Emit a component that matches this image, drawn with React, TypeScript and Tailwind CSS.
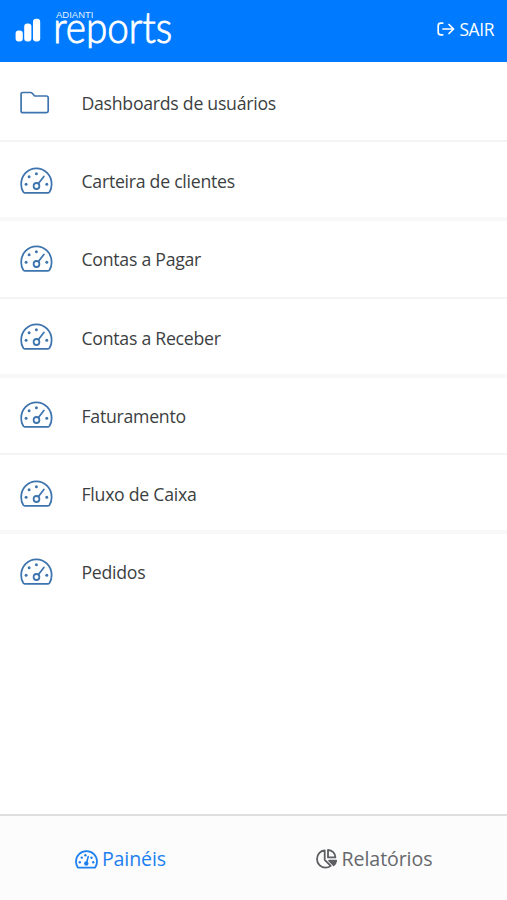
const rows = [
  'Dashboards de usuários',
  'Carteira de clientes',
  'Contas a Pagar',
  'Contas a Receber',
  'Faturamento',
  'Fluxo de Caixa',
  'Pedidos',
];

function Folder() {
  return (
    <svg className="h-[24px] w-[30px]" viewBox="0 0 30 24" fill="none" stroke="#3d74ad" strokeWidth="1.7" strokeLinejoin="round">
      <path d="M2.8 1.5H10.7Q11.6 1.5 12.2 2.2L14.7 5H26.3Q28.2 5 28.2 6.8V20.1Q28.2 21.6 26.5 21.6H2.9Q1.1 21.6 1.1 19.9V3.2Q1.1 1.5 2.8 1.5Z" />
    </svg>
  );
}

function Gauge() {
  return (
    <svg className="mb-[2px] h-[27px] w-[33px]" viewBox="0 0 34 27" preserveAspectRatio="none" fill="none" stroke="#3d74ad" strokeWidth="1.8" strokeLinecap="round" strokeLinejoin="round">
      <path d="M3.4 25.1C1.8 22.7 1.2 20.2 1.2 17.2C1.2 8.4 8.2 1.3 16.9 1.3S32.6 8.4 32.6 17.2C32.6 20.2 31.9 22.7 30.4 25.1Q29.9 25.8 29 25.8H4.8Q3.9 25.8 3.4 25.1Z" />
      <circle cx="17" cy="19" r="3" />
      <path d="M19 16.5L24.6 9.5" />
      <g fill="#3d74ad" stroke="none">
        <circle cx="6.3" cy="17.2" r="1.5" />
        <circle cx="9.4" cy="9.8" r="1.5" />
        <circle cx="16.9" cy="6.7" r="1.5" />
        <circle cx="27.6" cy="17.2" r="1.5" />
      </g>
    </svg>
  );
}

function Logo() {
  return (
    <svg className="h-[62px] w-[180px]" viewBox="0 0 180 62" fill="white">
      <clipPath id="wordmark">
        <rect x="50" y="0" width="130" height="48.2" />
      </clipPath>
      <rect x="15.6" y="30.5" width="7.2" height="11" rx="3.2" />
      <rect x="24.2" y="23.5" width="7.2" height="18" rx="3.2" />
      <rect x="33" y="18.7" width="7.2" height="22.8" rx="3.2" />
      <text x="56" y="18.4" fontSize="9" textLength="37.5" lengthAdjust="spacingAndGlyphs" fillOpacity="0.9" className="font-['Liberation_Sans',sans-serif]">ADIANTI</text>
      <text x="53.2" y="43" fontSize="43" stroke="white" strokeWidth="0.9" textLength="119" lengthAdjust="spacingAndGlyphs" clipPath="url(#wordmark)" className="font-[Lato,sans-serif] font-light">reports</text>
    </svg>
  );
}

function SignOut() {
  return (
    <svg className="mr-[4px] h-[14px] w-[18px]" viewBox="0 0 18 14" fill="none" stroke="white" strokeWidth="1.7" strokeLinecap="round" strokeLinejoin="round">
      <path d="M5.7 1.2H3.8Q1.2 1.2 1.2 3.8V10.2Q1.2 12.8 3.8 12.8H5.7M6 7H16.5M12 2.5L16.6 7L12 11.5" />
    </svg>
  );
}

function SmallGauge() {
  return (
    <svg className="mr-[4px] h-[19px] w-[23px]" viewBox="0 0 23 19" fill="none" stroke="#1d80f0" strokeWidth="1.8" strokeLinecap="round" strokeLinejoin="round">
      <path d="M2.7 17.2C1.4 15.4 1 13.6 1 11.5C1 5.6 5.7 1.1 11.5 1.1S22 5.6 22 11.5C22 13.6 21.6 15.4 20.3 17.2Q20 17.7 19.3 17.7H3.7Q3 17.7 2.7 17.2Z" />
      <path d="M11.7 12.5L13.2 6.6" strokeWidth="1.6" />
      <g fill="#1d80f0" stroke="none">
        <circle cx="11.3" cy="13.5" r="2.2" />
        <circle cx="4.8" cy="12.2" r="1.2" />
        <circle cx="6.8" cy="7.6" r="1.2" />
        <circle cx="10.4" cy="5.3" r="1.2" />
        <circle cx="16.5" cy="7.8" r="1.2" />
        <circle cx="18.2" cy="12.2" r="1.2" />
      </g>
    </svg>
  );
}

function Pie() {
  return (
    <svg className="mr-[4px] h-[20px] w-[22px]" viewBox="0 0 22 20" fill="none" stroke="#5c5e61" strokeWidth="1.8" strokeLinejoin="round">
      <path d="M8.7 1.4C4.3 1.7 1 5.3 1 9.9C1 14.8 4.8 18.6 9.5 18.6C11.6 18.6 13.3 18 14.7 16.9L8.7 10.9Z" />
      <path d="M12 1V8.4H19.4A7.6 7.6 0 0 0 12 1Z" />
      <path d="M13.1 11.6H20.2Q19.8 14.6 17.6 16.2Z" fill="#5c5e61" />
    </svg>
  );
}

export default function App() {
  return (
    <div className="flex h-[900px] w-[507px] flex-col overflow-hidden bg-white font-['Open_Sans',sans-serif]">
      <header className="flex h-[62px] shrink-0 items-center justify-between bg-[#007bff] pr-[13px]">
        <Logo />
        <button className="flex items-center pb-[5px] text-[17.4px] leading-[24px] tracking-[-0.4px] text-white">
          <SignOut />
          SAIR
        </button>
      </header>
      <ul className="min-h-0 flex-1 pt-[3px]">
        {rows.map((label, i) => (
          <li key={label} className="flex h-[78.2px] flex-col">
            <div className="flex min-h-0 flex-1 items-center pt-[2px] pl-[20px]">
              <div className="flex w-[61.5px] shrink-0 items-center">{i === 0 ? <Folder /> : <Gauge />}</div>
              <span className="text-[17.7px] leading-[24px] tracking-[-0.27px] text-[#3c3f42]">{label}</span>
            </div>
            <div className="flex h-[4px] items-center">
              {i < rows.length - 1 && <div className={`w-full ${i % 2 ? 'h-[4px] bg-[#f8f8f8]' : 'h-[2px] bg-[#f4f4f4]'}`} />}
            </div>
          </li>
        ))}
      </ul>
      <nav className="flex h-[86px] shrink-0 border-t-2 border-[#dfdfdf] bg-[#fcfcfc] pb-[1px] text-[19.6px] leading-[26px] tracking-[-0.1px]">
        <button className="flex w-[241px] items-center justify-center pt-[3px] text-[#1d80f0]">
          <SmallGauge />
          Painéis
        </button>
        <button className="flex w-[266px] items-center justify-center pt-[3px] text-[#66686b]">
          <Pie />
          Relatórios
        </button>
      </nav>
    </div>
  );
}
